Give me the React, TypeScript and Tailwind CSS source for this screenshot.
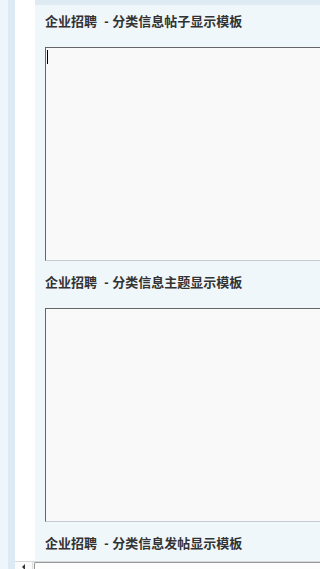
const sections = [
  { title: '企业招聘  - 分类信息帖子显示模板', caret: true },
  { title: '企业招聘  - 分类信息主题显示模板', caret: false },
  { title: '企业招聘  - 分类信息发帖显示模板', caret: false },
];

function TemplateBox({ caret }: { caret: boolean }) {
  return (
    <div className="relative mt-[13px] h-[214px] w-[400px]">
      <textarea
        readOnly
        className="block h-full w-full resize-none border border-t-[#666] border-l-[#666] border-r-[#ccc] border-b-[#c4ccd4] bg-[#f9f9f9] outline-none"
      />
      {/* text cursor */}
      {caret && <div className="absolute left-[2px] top-[3px] h-[14px] w-[1px] bg-black" />}
    </div>
  );
}

export default function App() {
  return (
    <div
      className="flex h-[569px] w-full overflow-hidden bg-white"
      style={{ fontFamily: '"Liberation Sans", "Noto Sans CJK SC", sans-serif' }}
    >
      {/* left frame strip */}
      <div className="w-[8px] shrink-0 bg-[#eef6fb]" />
      <div className="w-[7px] shrink-0 bg-[#dceaf5]" />

      <div className="flex min-w-0 flex-1 flex-col">
        <div className="flex min-h-0 flex-1">
          <div className="w-[20px] shrink-0 bg-white" />
          <div className="min-w-0 flex-1 overflow-hidden bg-[#f0f7fb]">
            <div className="h-[5px] bg-[#dfebf2]" />
            {sections.map(s => (
              <div key={s.title} className="pl-[10px]">
                <div className="mt-[5px] h-[24px] whitespace-pre text-[13px] font-bold leading-[24px] text-[#333]">
                  {s.title}
                </div>
                <TemplateBox caret={s.caret} />
                <div className="h-[5px]" />
              </div>
            ))}
          </div>
        </div>

        {/* horizontal scrollbar */}
        <div className="flex h-[8px] shrink-0 border-t border-[#d8d8d8] bg-[#f4f4f4]">
          <div className="flex w-[18px] shrink-0 items-start justify-center border-r border-[#e0e0e0] bg-[#fbfbfb] pt-[2px]">
            <div className="h-0 w-0 border-y-[3px] border-r-[3px] border-y-transparent border-r-[#333]" />
          </div>
          <div className="ml-[1px] flex-1 rounded-tl-[2px] border-l border-t border-[#999] bg-[#fdfdfd]" />
        </div>
      </div>
    </div>
  );
}
